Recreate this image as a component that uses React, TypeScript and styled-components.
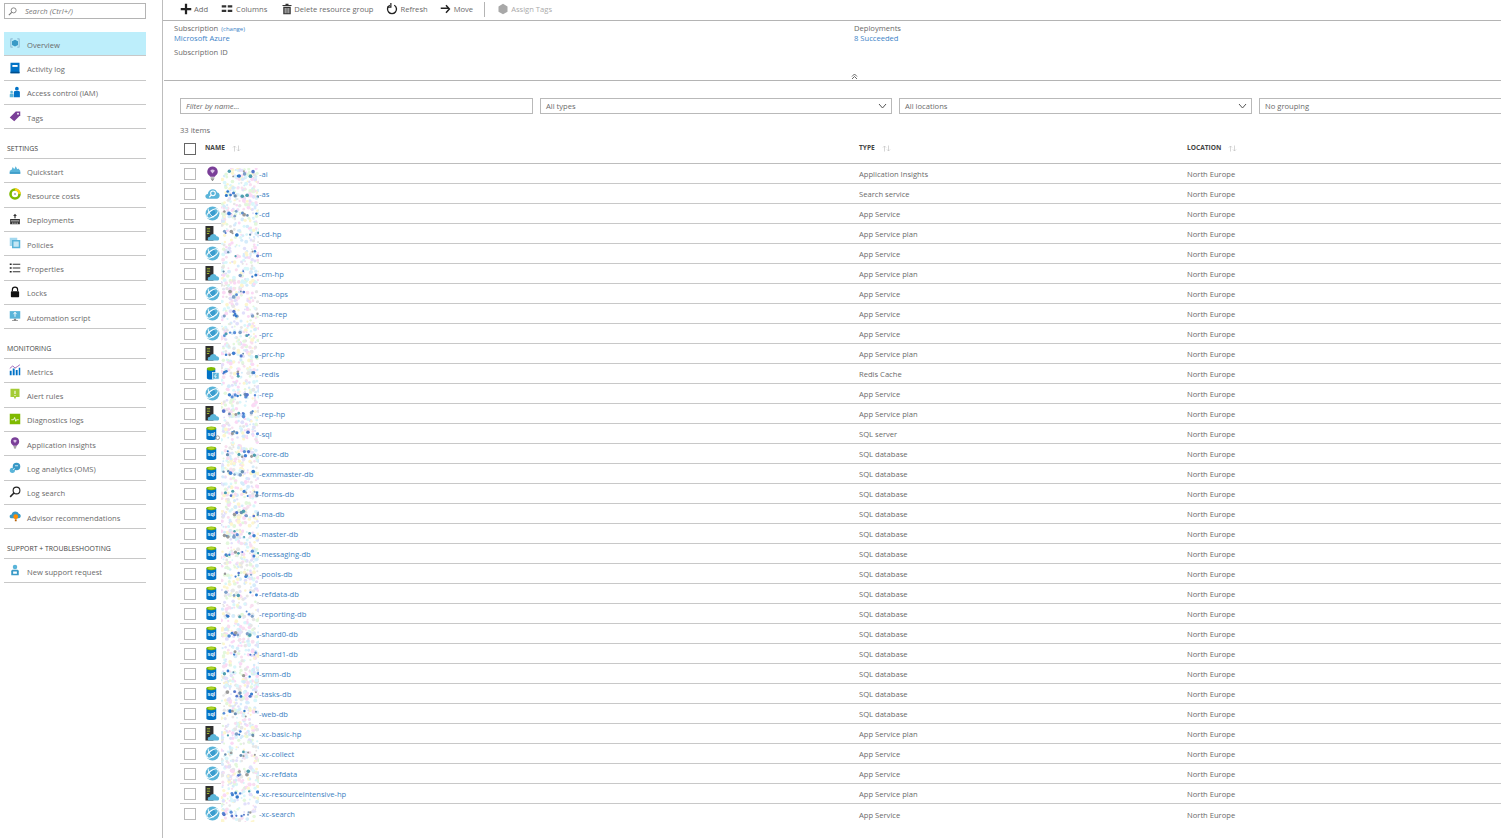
import React, { useMemo } from 'react';
import styled, { createGlobalStyle } from 'styled-components';

const GlobalStyle = createGlobalStyle`
  html, body {
    margin: 0;
    padding: 0;
    background: #fff;
    overflow: hidden;
  }
  * { box-sizing: border-box; }
`;

const Page = styled.div`
  width: 1501px;
  height: 838px;
  display: flex;
  overflow: hidden;
  font-family: 'Open Sans', 'Liberation Sans', sans-serif;
  font-size: 7.6px;
  color: #6a6a6a;
`;

const Sidebar = styled.aside`
  width: 163px;
  flex: none;
  padding: 3px 16px 0 4px;
  border-right: 1px solid #bdbdbd;
`;

const SearchBox = styled.div`
  height: 16px;
  border: 1px solid #b4b4b4;
  display: flex;
  align-items: center;
  gap: 8px;
  padding-left: 3px;
  margin-bottom: 13px;
  font-style: italic;
  color: #777;
`;

const NavItem = styled.div<{ $active?: boolean }>`
  height: 24.35px;
  display: flex;
  align-items: center;
  padding: 2px 0 0 5px;
  gap: 6px;
  border-bottom: 1px solid #c8c8c8;
  background: ${p => (p.$active ? '#bdeefb' : 'transparent')};
  svg { flex: none; width: 12px; height: 12px; margin-top: -3px; }
`;

const GroupLabel = styled.div`
  height: 29.6px;
  padding: 15px 0 0 3px;
  border-bottom: 1px solid #c8c8c8;
  font-size: 6.9px;
  color: #444;
  line-height: 10px;
`;

const Main = styled.main`
  flex: 1;
  min-width: 0;
  overflow: hidden;
  position: relative;
`;

const Toolbar = styled.div`
  height: 21px;
  border-bottom: 1px solid #b4b4b4;
  display: flex;
  align-items: center;
  padding: 0 0 2px 17px;
`;

const ToolButton = styled.div<{ $gap: number; $after: number; $off?: boolean }>`
  display: flex;
  align-items: center;
  gap: ${p => p.$gap}px;
  margin-right: ${p => p.$after}px;
  color: ${p => (p.$off ? '#aaa' : '#6a6a6a')};
  svg { flex: none; }
`;

const ToolDivider = styled.div`
  width: 1px;
  height: 15px;
  background: #b4b4b4;
  margin: 0 12px 0 0;
`;

const Info = styled.section`
  height: 60px;
  margin-left: 1px;
  border-bottom: 1px solid #b4b4b4;
  padding: 2px 0 0 10px;
  display: grid;
  grid-template-columns: 680px 1fr;
  position: relative;
`;

const InfoLabel = styled.div`
  line-height: 10px;
  height: 10px;
`;

const InfoLink = styled.a`
  display: block;
  line-height: 10px;
  height: 14px;
  color: #3c84c8;
`;

const ChangeLink = styled.span`
  font-size: 6px;
  color: #3c84c8;
  margin-left: 3px;
`;

const Collapse = styled.div`
  position: absolute;
  left: 687px;
  bottom: 0;
  line-height: 0;
`;

const Filters = styled.div`
  display: grid;
  grid-template-columns: 353px 352px 353px 260px;
  column-gap: 7px;
  margin: 17px 0 0 17px;
`;

const FilterField = styled.div<{ $italic?: boolean }>`
  height: 16px;
  border: 1px solid #b9b9b9;
  display: flex;
  align-items: center;
  justify-content: space-between;
  padding: 0 4px 0 5px;
  font-style: ${p => (p.$italic ? 'italic' : 'normal')};
`;

const Count = styled.div`
  margin: 11px 0 0 17px;
  line-height: 10px;
`;

const Table = styled.div`
  margin: 5px 0 0 17px;
  position: relative;
`;

const Columns = styled.div`
  display: grid;
  grid-template-columns: 25px 654px 328px 1fr;
  align-items: center;
`;

const HeadRow = styled(Columns)`
  height: 24px;
  border-bottom: 1px solid #bdbdbd;
  padding-bottom: 8px;
  font-size: 6.6px;
  font-weight: 700;
  color: #444;
`;

const Row = styled(Columns)`
  height: 20px;
  border-bottom: 1px solid #c8c8c8;
  &:last-child { border-bottom: none; }
`;

const SortMark = styled.span`
  display: inline-flex;
  margin-left: 7px;
  vertical-align: middle;
`;

const Check = styled.div<{ $dark?: boolean }>`
  width: 12px;
  height: 12px;
  margin: ${p => (p.$dark ? '2px' : '0')} 0 0 4px;
  border: 1px solid ${p => (p.$dark ? '#666' : '#bbb')};
`;

const NameCell = styled.div`
  display: flex;
  align-items: center;
  svg { flex: none; margin-top: -1px; }
`;

const NameLink = styled.a`
  margin-left: 39px;
  color: #3c7fc2;
`;

const Noise = styled.svg`
  position: absolute;
  left: 41px;
  top: 28px;
  pointer-events: none;
`;

const Cell = styled.div`
  padding-top: 1px;
`;

/* toolbar and sidebar glyphs */
const Ic = ({ s = 12, children }: { s?: number; children: React.ReactNode }) => (
  <svg width={s} height={s} viewBox="0 0 16 16">{children}</svg>
);

const Globe = () => (
  <Ic s={15}>
    <circle cx="8" cy="8" r="7.400" fill="#59b4d9" />
    <circle cx="8" cy="7.500" r="3.200" fill="#3a9ccf" />
    <ellipse cx="8" cy="8" rx="7" ry="3.400" fill="none" stroke="#fff" strokeWidth="1.300" transform="rotate(-35 8 8)" />
    <path d="M3.500 2.800C3.200 6 5.500 9.500 9 12" fill="none" stroke="#fff" strokeWidth="1" />
  </Ic>
);

const Plan = () => (
  <Ic s={15}>
    <rect x="0.500" y="0" width="8.500" height="15.500" fill="#2f2f2f" />
    <path d="M2 3h3.500M2 5.500h3.500M2 8h2.500" stroke="#b8d432" strokeWidth=".9" />
    <path d="M5 15.500c-2.800 0-2.800-4 .3-4 .5-3.500 6-4 7-.5 3-.300 4 4.500.7 4.500z" fill="#59b4d9" />
  </Ic>
);

const Sql = ({ badge }: { badge?: boolean }) => (
  <svg width="15" height="15" viewBox="0 0 16 16">
    <path d="M1.500 2.500v11c0 2 10.500 2 10.500 0v-11z" fill="#0072c6" />
    <ellipse cx="6.750" cy="2.500" rx="5.250" ry="2" fill="#7fba00" />
    <ellipse cx="6.750" cy="2.500" rx="3.500" ry="1.100" fill="#b8d432" />
    <text x="6.750" y="11" fontSize="5.500" fill="#fff" fontWeight="700" textAnchor="middle" fontFamily="'Liberation Sans', sans-serif">sql</text>
    {badge && <circle cx="13.500" cy="12.500" r="2" fill="none" stroke="#999" strokeWidth="1" />}
  </svg>
);

const Redis = () => (
  <Ic s={15}>
    <path d="M2 3v10c0 2 9 2 9 0V3z" fill="#0072c6" />
    <ellipse cx="6.500" cy="3" rx="4.500" ry="2" fill="#7fba00" />
    <rect x="8" y="7" width="7" height="7" fill="#59b4d9" stroke="#fff" strokeWidth=".7" />
    <path d="M12.500 8l-2.500 3h2l-1 2" stroke="#fff" strokeWidth=".8" fill="none" />
  </Ic>
);

const Bulb = () => (
  <Ic s={15}>
    <path d="M8 0.500a5.500 5.500 0 0 0-3.200 10l.8 1h4.800l.8-1a5.500 5.500 0 0 0-3.200-10z" fill="#7a3f98" />
    <path d="M5.500 5l2.500 3 2.500-3a3.500 3.500 0 0 0-5 0z" fill="#d9c3e6" />
    <path d="M6 12.800h4M6.500 14.200h3M7.300 15.600h1.400" stroke="#777" strokeWidth="1" />
  </Ic>
);

const SearchCloud = () => (
  <Ic s={15}>
    <path d="M3 13.500c-3.500 0-3.500-5 0-5 .5-6 8.500-7 10-1.500 3.500 0 3.500 6.500 0 6.500z" fill="#59b4d9" />
    <circle cx="8.500" cy="7.800" r="2.500" fill="none" stroke="#fff" strokeWidth="1.100" />
    <path d="M6.600 9.800l-2 2.200" stroke="#fff" strokeWidth="1.200" />
  </Ic>
);

const Magnifier = ({ color = '#222', s = 12 }: { color?: string; s?: number }) => (
  <Ic s={s}>
    <circle cx="10" cy="6" r="4.500" fill="none" stroke={color} strokeWidth="1.500" />
    <path d="M6.600 9.400L1.500 14.500" stroke={color} strokeWidth="2" />
  </Ic>
);

const navIcons: Record<string, React.ReactNode> = {
  overview: (
    <Ic>
      <path d="M2 2h3v1H3v10h2v1H2zM14 2h-3v1h2v10h-2v1h3z" fill="#7aa7c7" />
      <path d="M8 3.500l4 2v5l-4 2-4-2v-5z" fill="#3999c6" />
    </Ic>
  ),
  activity: (
    <Ic>
      <rect x="2" y="1" width="12" height="14" fill="#0072c6" />
      <rect x="4.500" y="4" width="7" height="2.500" fill="#fff" />
      <rect x="2" y="13" width="12" height="2" fill="#004e8c" />
    </Ic>
  ),
  iam: (
    <Ic>
      <circle cx="10.500" cy="3.500" r="2.500" fill="#0072c6" />
      <path d="M6.500 15V8.500c0-1.500 1-2 2-2h4c1 0 2 .5 2 2V15z" fill="#0072c6" />
      <circle cx="3.500" cy="8" r="1.800" fill="#59b4d9" />
      <path d="M1 15v-3.500C1 10.500 2 10 2.500 10h2c.5 0 1.500.5 1.500 1.500V15z" fill="#59b4d9" />
    </Ic>
  ),
  tags: (
    <Ic>
      <path d="M1 10L9 2h6v5l-8 8z" fill="#7a3f98" />
      <circle cx="12" cy="5" r="1.200" fill="#fff" />
    </Ic>
  ),
  quickstart: (
    <Ic>
      <path d="M1 13V9l2.500-1.500L5 4l2 3 2-4 2 4 1.500-1L15 9v4z" fill="#59b4d9" />
      <path d="M1 11h14v2H1z" fill="#3999c6" />
    </Ic>
  ),
  costs: (
    <Ic>
      <circle cx="8" cy="8" r="6" fill="none" stroke="#7fba00" strokeWidth="3.500" />
      <path d="M8 2a6 6 0 0 1 6 6" fill="none" stroke="#fcd116" strokeWidth="3.500" />
      <circle cx="8" cy="8" r="1" fill="#555" />
    </Ic>
  ),
  deployments: (
    <Ic>
      <path d="M8 1l2.500 3h-1.700v3H7.200V4H5.500z" fill="#333" />
      <path d="M1.500 8h13v7h-13z" fill="#333" />
      <path d="M2.500 10.500h11M4 13.500h2M7 13.500h2M10 13.500h2" stroke="#fff" strokeWidth="1" />
    </Ic>
  ),
  policies: (
    <Ic>
      <rect x="1" y="1" width="10" height="11" fill="#a3d8ef" />
      <rect x="4" y="4" width="11" height="11" fill="#59b4d9" />
      <rect x="6" y="6" width="7" height="7" fill="#c5e7f5" />
    </Ic>
  ),
  properties: (
    <Ic>
      <path d="M1 2h2.500v2H1zM1 7h2.500v2H1zM1 12h2.500v2H1z" fill="#222" />
      <path d="M5 3h10M5 8h10M5 13h10" stroke="#333" strokeWidth="1.400" />
    </Ic>
  ),
  locks: (
    <Ic>
      <path d="M4.500 7V5a3.500 3.500 0 0 1 7 0v2" fill="none" stroke="#111" strokeWidth="1.600" />
      <rect x="2.500" y="7" width="11" height="8" rx="1" fill="#111" />
    </Ic>
  ),
  automation: (
    <Ic>
      <rect x="1" y="1.500" width="14" height="10" fill="#59b4d9" />
      <path d="M8 3v6M6 5.500L8 3l2 2.500" stroke="#fff" strokeWidth="1.200" fill="none" />
      <path d="M6.500 11.500h3v2h-3zM4 13.500h8v1H4z" fill="#888" />
    </Ic>
  ),
  metrics: (
    <Ic>
      <path d="M1 15V9h2.500v6zM5 15V6h2.500v9zM9 15V8h2.500v7zM13 15V5h2v10z" fill="#0072c6" />
      <path d="M1 6l4-3.500 3 3 3-2 3.500-2.500" fill="none" stroke="#a066b8" strokeWidth="1.300" />
    </Ic>
  ),
  alert: (
    <Ic>
      <path d="M2 1h12v11H9.500L8 15l-1.500-3H2z" fill="#a4cc35" />
      <path d="M8 3.500v4.500M8 9.300v1.200" stroke="#fff" strokeWidth="1.400" />
    </Ic>
  ),
  diagnostics: (
    <Ic>
      <rect x="1" y="1" width="14" height="14" fill="#7fba00" />
      <path d="M3 9h3l1.500-3 1.500 5 1-2h3" fill="none" stroke="#fff" strokeWidth="1.100" />
    </Ic>
  ),
  insights: <Bulb />,
  analytics: (
    <Ic>
      <circle cx="10" cy="6" r="5" fill="#3999c6" />
      <circle cx="4.500" cy="11" r="3.500" fill="#59b4d9" />
      <path d="M7.500 8.500l-2 2" stroke="#fff" strokeWidth="1" />
      <path d="M8 5h4" stroke="#fff" strokeWidth="1" />
    </Ic>
  ),
  logsearch: <Magnifier />,
  advisor: (
    <Ic>
      <path d="M3.500 11c-3.500 0-3.500-5 0-5 .5-5 8-5.500 9.500-1 3.500 0 3.500 6 0 6z" fill="#3999c6" />
      <circle cx="9" cy="9" r="3.200" fill="#ff8c00" />
      <path d="M7.800 12.500h2.400v2.500H7.800z" fill="#b45f06" />
    </Ic>
  ),
  support: (
    <Ic>
      <circle cx="8" cy="4" r="3" fill="#59b4d9" />
      <path d="M3 15V9.500C3 8 4.500 7.500 5.500 7.500h5c1 0 2.500.5 2.500 2V15z" fill="#3999c6" />
      <rect x="5.500" y="10" width="5" height="3" fill="#fff" />
    </Ic>
  ),
};

type NavEntry = { label: string; icon: string; active?: boolean };
type NavGroup = { title?: string; items: NavEntry[] };

const nav: NavGroup[] = [
  {
    items: [
      { label: 'Overview', icon: 'overview', active: true },
      { label: 'Activity log', icon: 'activity' },
      { label: 'Access control (IAM)', icon: 'iam' },
      { label: 'Tags', icon: 'tags' },
    ],
  },
  {
    title: 'SETTINGS',
    items: [
      { label: 'Quickstart', icon: 'quickstart' },
      { label: 'Resource costs', icon: 'costs' },
      { label: 'Deployments', icon: 'deployments' },
      { label: 'Policies', icon: 'policies' },
      { label: 'Properties', icon: 'properties' },
      { label: 'Locks', icon: 'locks' },
      { label: 'Automation script', icon: 'automation' },
    ],
  },
  {
    title: 'MONITORING',
    items: [
      { label: 'Metrics', icon: 'metrics' },
      { label: 'Alert rules', icon: 'alert' },
      { label: 'Diagnostics logs', icon: 'diagnostics' },
      { label: 'Application insights', icon: 'insights' },
      { label: 'Log analytics (OMS)', icon: 'analytics' },
      { label: 'Log search', icon: 'logsearch' },
      { label: 'Advisor recommendations', icon: 'advisor' },
    ],
  },
  {
    title: 'SUPPORT + TROUBLESHOOTING',
    items: [{ label: 'New support request', icon: 'support' }],
  },
];

type Kind = 'ai' | 'search' | 'app' | 'plan' | 'redis' | 'server' | 'db';

const typeNames: Record<Kind, string> = {
  ai: 'Application Insights',
  search: 'Search service',
  app: 'App Service',
  plan: 'App Service plan',
  redis: 'Redis Cache',
  server: 'SQL server',
  db: 'SQL database',
};

const kindIcon = (k: Kind) => {
  switch (k) {
    case 'ai': return <Bulb />;
    case 'search': return <SearchCloud />;
    case 'app': return <Globe />;
    case 'plan': return <Plan />;
    case 'redis': return <Redis />;
    case 'server': return <Sql badge />;
    default: return <Sql />;
  }
};

const rows: [string, Kind][] = [
  ['ai', 'ai'], ['as', 'search'], ['cd', 'app'], ['cd-hp', 'plan'], ['cm', 'app'], ['cm-hp', 'plan'],
  ['ma-ops', 'app'], ['ma-rep', 'app'], ['prc', 'app'], ['prc-hp', 'plan'], ['redis', 'redis'],
  ['rep', 'app'], ['rep-hp', 'plan'], ['sql', 'server'], ['core-db', 'db'], ['exmmaster-db', 'db'],
  ['forms-db', 'db'], ['ma-db', 'db'], ['master-db', 'db'], ['messaging-db', 'db'], ['pools-db', 'db'],
  ['refdata-db', 'db'], ['reporting-db', 'db'], ['shard0-db', 'db'], ['shard1-db', 'db'], ['smm-db', 'db'],
  ['tasks-db', 'db'], ['web-db', 'db'], ['xc-basic-hp', 'plan'], ['xc-collect', 'app'], ['xc-refdata', 'app'],
  ['xc-resourceintensive-hp', 'plan'], ['xc-search', 'app'],
];

const pastel = ['#fbd9f5', '#d9f7fb', '#e2e0fb', '#e3f8dc', '#fdf6cf', '#d5ecfb', '#e6e6e6', '#f9dff0'];
const strong = ['#3f7fd0', '#5a8fd8', '#2f78c8', '#7fa0c8', '#6a8fb0', '#5577cc', '#9a9a9a', '#4f9fb0'];

// scrambled name prefixes: pale speckle everywhere, darker dots on each text line
const NameScramble = () => {
  const dots = useMemo(() => {
    let seed = 4711;
    const rnd = () => {
      seed = (seed * 16807) % 2147483647;
      return seed / 2147483647;
    };
    const out: { x: number; y: number; r: number; c: string }[] = [];
    for (let i = 0; i < 2000; i++) {
      out.push({ x: rnd() * 38, y: rnd() * 654, r: 0.9 + rnd() * 1.1, c: pastel[Math.floor(rnd() * pastel.length)] });
    }
    for (let row = 0; row < 33; row++) {
      const n = 5 + Math.floor(rnd() * 6);
      for (let i = 0; i < n; i++) {
        out.push({
          x: 2 + rnd() * 36,
          y: 6 + row * 20 + (rnd() - 0.5) * 6,
          r: 0.9 + rnd() * 1,
          c: strong[Math.floor(rnd() * strong.length)],
        });
      }
    }
    return out;
  }, []);
  return (
    <Noise width="38" height="654" viewBox="0 0 38 654">
      <rect width="38" height="654" fill="#fff" />
      {dots.map((d, i) => (
        <circle key={i} cx={d.x} cy={d.y} r={d.r} fill={d.c} />
      ))}
    </Noise>
  );
};

const SortArrows = () => (
  <SortMark>
    <svg width="9" height="7" viewBox="0 0 9 7">
      <path d="M2.500 6.500V1M1 2.500L2.500 1 4 2.500M6.500 .5V6M5 4.500L6.500 6 8 4.500" fill="none" stroke="#c4c4c4" strokeWidth=".7" />
    </svg>
  </SortMark>
);

const Chevron = () => (
  <svg width="9" height="6" viewBox="0 0 9 6">
    <path d="M1 1l3.500 4L8 1" fill="none" stroke="#555" strokeWidth="1" />
  </svg>
);

export default function App() {
  return (
    <Page>
      <GlobalStyle />
      <Sidebar>
        <SearchBox>
          <Magnifier color="#777" s={9} />
          Search (Ctrl+/)
        </SearchBox>
        {nav.map((group, i) => (
          <React.Fragment key={i}>
            {group.title && <GroupLabel>{group.title}</GroupLabel>}
            {group.items.map(item => (
              <NavItem key={item.label} $active={item.active}>
                {navIcons[item.icon]}
                {item.label}
              </NavItem>
            ))}
          </React.Fragment>
        ))}
      </Sidebar>
      <Main>
        <Toolbar>
          <ToolButton $gap={2} $after={13}>
            <Ic><path d="M6.500 1h3v5.500H15v3H9.500V15h-3V9.500H1v-3h5.500z" fill="#222" /></Ic>
            Add
          </ToolButton>
          <ToolButton $gap={3} $after={14}>
            <Ic><path d="M1 3h6v3H1zM9 3h6v3H9zM1 9h6v3H1zM9 9h6v3H9z" fill="#333" /></Ic>
            Columns
          </ToolButton>
          <ToolButton $gap={1} $after={12}>
            <Ic><path d="M6 1h4v1.500h4V4H2V2.500h4zM3 5h10v10H3zM5 6.500v7h1v-7zM7.500 6.500v7h1v-7zM10 6.500v7h1v-7z" fill="#333" fillRule="evenodd" /></Ic>
            Delete resource group
          </ToolButton>
          <ToolButton $gap={3} $after={12}>
            <Ic><path d="M5 3a6 6 0 1 0 6 0" fill="none" stroke="#222" strokeWidth="1.800" /><path d="M6.500 0v5.500H1.500" fill="none" stroke="#222" strokeWidth="1.600" /></Ic>
            Refresh
          </ToolButton>
          <ToolButton $gap={2} $after={11}>
            <Ic><path d="M1 7h10.500M8 3l4.500 5L8 13" fill="none" stroke="#222" strokeWidth="2" /></Ic>
            Move
          </ToolButton>
          <ToolDivider />
          <ToolButton $gap={2} $after={0} $off>
            <Ic><path d="M8 1l6 3.500v7L8 15l-6-3.500v-7z" fill="#a8a8a8" /></Ic>
            Assign Tags
          </ToolButton>
        </Toolbar>
        <Info>
          <div>
            <InfoLabel>Subscription<ChangeLink>(change)</ChangeLink></InfoLabel>
            <InfoLink>Microsoft Azure</InfoLink>
            <InfoLabel>Subscription ID</InfoLabel>
          </div>
          <div>
            <InfoLabel>Deployments</InfoLabel>
            <InfoLink>8 Succeeded</InfoLink>
          </div>
          <Collapse>
            <svg width="7" height="7" viewBox="0 0 7 7">
              <path d="M1 3.500l2.500-2.500L6 3.500M1 6l2.500-2.500L6 6" fill="none" stroke="#444" strokeWidth=".8" />
            </svg>
          </Collapse>
        </Info>
        <Filters>
          <FilterField $italic>Filter by name...</FilterField>
          <FilterField>All types<Chevron /></FilterField>
          <FilterField>All locations<Chevron /></FilterField>
          <FilterField>No grouping</FilterField>
        </Filters>
        <Count>33 items</Count>
        <Table>
          <NameScramble />
          <HeadRow>
            <Check $dark />
            <div>NAME<SortArrows /></div>
            <div>TYPE<SortArrows /></div>
            <div>LOCATION<SortArrows /></div>
          </HeadRow>
          {rows.map(([name, kind]) => (
            <Row key={name}>
              <Check />
              <NameCell>
                {kindIcon(kind)}
                <NameLink>-{name}</NameLink>
              </NameCell>
              <Cell>{typeNames[kind]}</Cell>
              <Cell>North Europe</Cell>
            </Row>
          ))}
        </Table>
      </Main>
    </Page>
  );
}
